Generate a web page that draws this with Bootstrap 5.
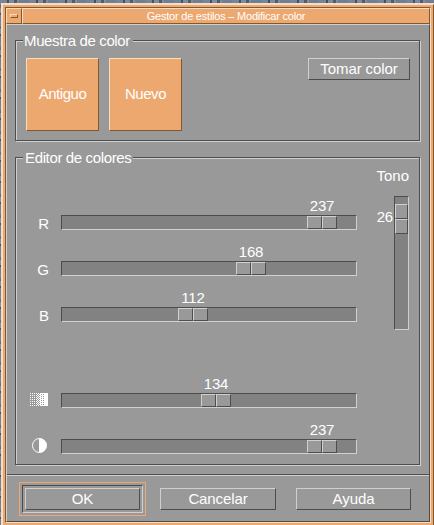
<!DOCTYPE html>
<html lang="es">
<head>
<meta charset="utf-8">
<meta name="viewport" content="width=device-width, initial-scale=1">
<title>Gestor de estilos – Modificar color</title>
<link href="https://cdn.jsdelivr.net/npm/bootstrap@5.3.0/dist/css/bootstrap.min.css" rel="stylesheet">
<style>
:root{--face:#999;--lite:#d0d0d0;--dark:#4d4d4d;--trough:#828282;--or:#eda870;--orl:#f9dcc4;--ord:#82592f}
body{font:15px/18px "Liberation Sans",Arial,sans-serif;color:#fff;width:434px;height:525px;
 background:repeating-linear-gradient(90deg,#7886984d 0 7px,#262c3699 7px 9px,#8c9bb04d 9px 14px,#3a404999 14px 17px,#a39a904d 17px 19px,#6070884d 19px 29px),
 repeating-linear-gradient(180deg,#75859a 0 5px,#566478 5px 8px,#8795a8 8px 13px,#343b46 13px 15px,#6d7d94 15px 21px)}
.wm-frame{margin:3px 0 0 1px;width:434px;height:524px;background:var(--or);border:2px solid;border-color:var(--orl) var(--ord) var(--ord) var(--orl);padding:2px}
.wm-inner{width:426px;height:516px;border:1px solid;border-color:var(--ord) var(--orl) var(--orl) var(--ord)}
.raised{border:1px solid;border-color:var(--lite) var(--dark) var(--dark) var(--lite)}
.sunken{border:1px solid;border-color:var(--dark) var(--lite) var(--lite) var(--dark)}
.or-raised{background:var(--or);border:1px solid;border-color:var(--orl) var(--ord) var(--ord) var(--orl)}
.title-row{height:16px}
.wm-menu{width:16px}
.wm-dash{width:8px;height:4px}
.wm-title{font-size:11px;line-height:14px;letter-spacing:-.22px}
.client{height:498px;background:var(--face)}
.etched{width:405px;margin-left:8px;border:1px solid var(--dark);box-shadow:1px 1px 0 var(--lite),inset 1px 1px 0 var(--lite)}
.sample{height:101px;margin-top:15px}
.editor{height:308px;margin-top:16px}
.cap{background:var(--face);height:18px;margin:-9px 0 0 7px;padding:0 1px;width:110px;letter-spacing:-.36px;white-space:nowrap}
.editor .cap{padding-left:2px}
.swatches{gap:10px;padding:8px 9px 0 10px}
.swatch{width:73px;height:73px;padding-bottom:2px;letter-spacing:-.45px}
.flat{background:var(--face);color:#fff;height:22px;padding:0;letter-spacing:-.1px}
.pick{width:102px}
.scales{width:341px;padding-top:30px}
.scale-row{height:33px;margin-bottom:13px}
.row-lower{margin-top:53px}
.scale-tag{width:33px;height:15px;margin-right:12px;line-height:18px}
.scale-val{width:30px;margin-left:calc(var(--at) + 1px);letter-spacing:-.2px}
.trough{width:296px;height:15px;background:var(--trough)}
.thumb{width:30px;height:13px;margin-left:var(--at)}
.thumb>i,.tone-thumb>i{flex:1;background:var(--face)}
.half{margin:0 2px 0 0}
.tone{width:62px;padding-right:10px}
.tone-name{text-align:right}
.tone-body{margin-top:11px}
.tone-val{margin:12px 1px 0 0;letter-spacing:-.2px}
.tone-trough{width:15px;height:134px;background:var(--trough);padding-top:7px}
.tone-thumb{height:30px}
.rule{height:2px;margin-top:9px;background:linear-gradient(var(--dark) 50%,var(--lite) 50%)}
.actions{padding:6px 0 0 12px}
.focus-box{width:127px;height:34px;border:1px solid var(--or);padding:2px}
.default-box{height:28px;padding:2px}
.cancel{width:116px;margin-left:14px}
.help{width:115px;margin-left:20px}
</style>
<script src="https://cdn.jsdelivr.net/npm/bootstrap@5.3.0/dist/js/bootstrap.bundle.min.js"></script>
</head>
<body class="overflow-hidden">
<main class="wm-frame">
 <div class="wm-inner">
  <header class="title-row d-flex">
   <div class="wm-menu or-raised d-flex align-items-center justify-content-center"><span class="wm-dash or-raised"></span></div>
   <div class="wm-title or-raised flex-fill text-center">Gestor de estilos – Modificar color</div>
  </header>
  <section class="client raised">
   <div class="etched sample">
    <div class="cap">Muestra de color</div>
    <div class="swatches d-flex align-items-start">
     <div class="swatch or-raised d-flex align-items-center justify-content-center">Antiguo</div>
     <div class="swatch or-raised d-flex align-items-center justify-content-center">Nuevo</div>
     <button class="flat raised pick ms-auto">Tomar color</button>
    </div>
   </div>
   <div class="etched editor">
    <div class="cap">Editor de colores</div>
    <div class="d-flex justify-content-between">
     <div class="scales">
      <div class="scale-row d-flex align-items-end"><div class="scale-tag text-end">R</div><div><div class="scale-val text-center" style="--at:245px">237</div><div class="trough sunken"><div class="thumb d-flex" style="--at:245px"><i class="raised"></i><i class="raised"></i></div></div></div></div>
      <div class="scale-row d-flex align-items-end"><div class="scale-tag text-end">G</div><div><div class="scale-val text-center" style="--at:174px">168</div><div class="trough sunken"><div class="thumb d-flex" style="--at:174px"><i class="raised"></i><i class="raised"></i></div></div></div></div>
      <div class="scale-row d-flex align-items-end"><div class="scale-tag text-end">B</div><div><div class="scale-val text-center" style="--at:116px">112</div><div class="trough sunken"><div class="thumb d-flex" style="--at:116px"><i class="raised"></i><i class="raised"></i></div></div></div></div>
      <div class="scale-row row-lower d-flex align-items-end"><div class="scale-tag d-flex justify-content-end">
       <svg width="19" height="15" shape-rendering="crispEdges"><defs>
        <pattern id="d1" width="2" height="2" patternUnits="userSpaceOnUse"><path fill="#fff" d="M0 0h1v1H0z"/></pattern>
        <pattern id="d2" width="2" height="2" patternUnits="userSpaceOnUse"><path fill="#fff" d="M0 0h1v1H0zM1 1h1v1H1z"/></pattern>
        <pattern id="d3" width="2" height="2" patternUnits="userSpaceOnUse"><path fill="#fff" d="M0 0h2v1H0zM0 1h1v1H0z"/></pattern></defs>
        <path fill="url(#d1)" d="M0 0h6v13H0z"/><path fill="url(#d2)" d="M6 0h4v13H6z"/><path fill="url(#d3)" d="M10 0h4v13h-4z"/><path fill="#fff" d="M14 0h4v13h-4z"/></svg>
      </div><div><div class="scale-val text-center" style="--at:139px">134</div><div class="trough sunken"><div class="thumb d-flex" style="--at:139px"><i class="raised"></i><i class="raised"></i></div></div></div></div>
      <div class="scale-row d-flex align-items-end"><div class="scale-tag d-flex justify-content-end">
       <svg width="15" height="15" class="half flex-shrink-0 overflow-visible" viewBox="0 1 15 15"><circle cx="7.5" cy="7.5" r="7" fill="none" stroke="#fff"/><path fill="#fff" d="M7 .5h.5a7 7 0 0 1 0 14H7z"/></svg>
      </div><div><div class="scale-val text-center" style="--at:245px">237</div><div class="trough sunken"><div class="thumb d-flex" style="--at:245px"><i class="raised"></i><i class="raised"></i></div></div></div></div>
     </div>
     <div class="tone">
      <div class="tone-name">Tono</div>
      <div class="d-flex justify-content-end tone-body">
       <span class="tone-val">26</span>
       <div class="tone-trough sunken"><div class="tone-thumb d-flex flex-column"><i class="raised"></i><i class="raised"></i></div></div>
      </div>
     </div>
    </div>
   </div>
   <div class="rule"></div>
   <div class="actions d-flex align-items-center">
    <div class="focus-box"><div class="default-box sunken"><button class="flat raised w-100 d-block">OK</button></div></div>
    <button class="flat raised cancel">Cancelar</button>
    <button class="flat raised help">Ayuda</button>
   </div>
  </section>
 </div>
</main>
</body>
</html>
